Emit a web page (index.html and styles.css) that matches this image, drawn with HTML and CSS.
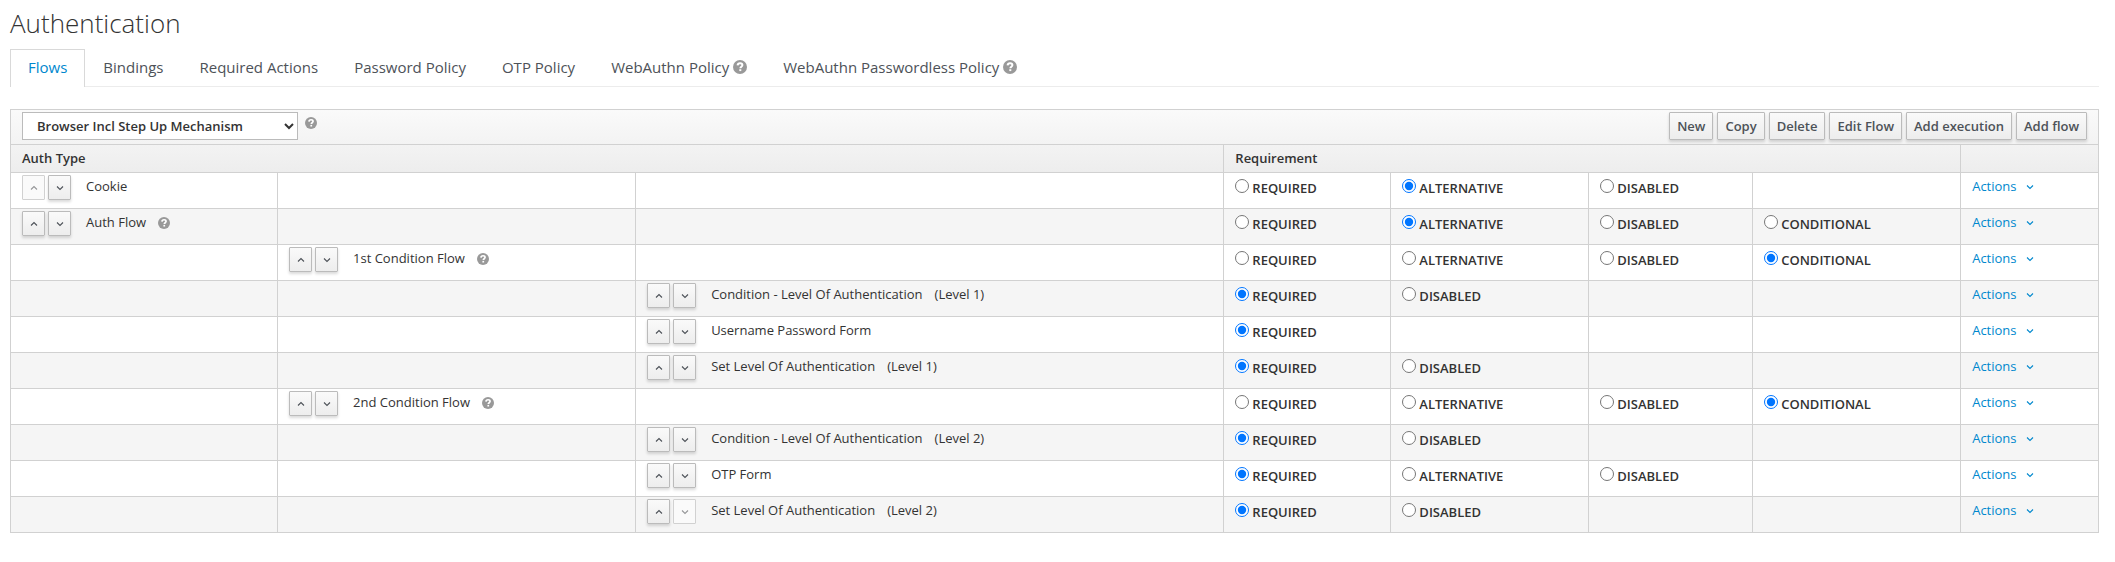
FILE: index.html
```html
<!DOCTYPE html>
<html lang="en">
<head>
<meta charset="utf-8">
<title>Authentication</title>
<link rel="stylesheet" href="styles.css">
</head>
<body>
<svg class="sprite" aria-hidden="true">
  <symbol id="help" viewBox="0 0 14 14"><circle cx="7" cy="7" r="7" fill="#999"/><path d="M4.6 5.4C4.7 4 5.7 3.2 7.1 3.2c1.4 0 2.3.8 2.3 1.9 0 1.7-2 1.6-2 3.2" fill="none" stroke="#fff" stroke-width="2"/><path d="M6.3 9.2h2v1.9h-2z" fill="#fff"/></symbol>
  <symbol id="up" viewBox="0 0 8 8"><path d="M1 5.5 4 2.5l3 3" fill="none" stroke="currentColor" stroke-width="1.1"/></symbol>
  <symbol id="down" viewBox="0 0 8 8"><path d="M1 2.5l3 3 3-3" fill="none" stroke="currentColor" stroke-width="1.1"/></symbol>
</svg>
<main class="page">
  <h1 class="title">Authentication</h1>
  <nav>
    <ul class="tabs">
      <li><a class="tab active" href="#">Flows</a></li>
      <li><a class="tab" href="#">Bindings</a></li>
      <li><a class="tab" href="#">Required Actions</a></li>
      <li><a class="tab" href="#">Password Policy</a></li>
      <li><a class="tab" href="#">OTP Policy</a></li>
      <li><a class="tab" href="#">WebAuthn Policy<svg class="help"><use href="#help"/></svg></a></li>
      <li><a class="tab" href="#">WebAuthn Passwordless Policy<svg class="help"><use href="#help"/></svg></a></li>
    </ul>
  </nav>
  <table class="flows">
    <colgroup><col class="c1"><col class="c2"><col class="c3"><col class="c4"><col class="c5"><col class="c6"><col class="c7"><col class="c8"></colgroup>
    <thead>
      <tr>
        <th colspan="8" class="bar">
          <div class="toolbar">
            <select class="picker" aria-label="Flow"><option>Browser Incl Step Up Mechanism</option></select>
            <svg class="help"><use href="#help"/></svg>
            <div class="buttons">
              <button class="btn">New</button>
              <button class="btn">Copy</button>
              <button class="btn">Delete</button>
              <button class="btn">Edit Flow</button>
              <button class="btn">Add execution</button>
              <button class="btn">Add flow</button>
            </div>
          </div>
        </th>
      </tr>
      <tr class="heads"><th colspan="3">Auth Type</th><th colspan="4">Requirement</th><th></th></tr>
    </thead>
    <tbody>
      <tr>
        <td><div class="step"><button class="move" aria-label="Move up" disabled><svg><use href="#up"/></svg></button><button class="move" aria-label="Move down"><svg><use href="#down"/></svg></button><span class="name">Cookie</span></div></td><td></td><td></td>
        <td><label class="opt"><input type="radio" name="r1">REQUIRED</label></td>
        <td><label class="opt"><input type="radio" name="r1" checked>ALTERNATIVE</label></td>
        <td><label class="opt"><input type="radio" name="r1">DISABLED</label></td>
        <td></td>
        <td><a class="actions" href="#">Actions<svg><use href="#down"/></svg></a></td>
      </tr>
      <tr>
        <td><div class="step"><button class="move" aria-label="Move up"><svg><use href="#up"/></svg></button><button class="move" aria-label="Move down"><svg><use href="#down"/></svg></button><span class="name">Auth Flow</span><svg class="help"><use href="#help"/></svg></div></td><td></td><td></td>
        <td><label class="opt"><input type="radio" name="r2">REQUIRED</label></td>
        <td><label class="opt"><input type="radio" name="r2" checked>ALTERNATIVE</label></td>
        <td><label class="opt"><input type="radio" name="r2">DISABLED</label></td>
        <td><label class="opt"><input type="radio" name="r2">CONDITIONAL</label></td>
        <td><a class="actions" href="#">Actions<svg><use href="#down"/></svg></a></td>
      </tr>
      <tr>
        <td></td><td><div class="step"><button class="move" aria-label="Move up"><svg><use href="#up"/></svg></button><button class="move" aria-label="Move down"><svg><use href="#down"/></svg></button><span class="name">1st Condition Flow</span><svg class="help"><use href="#help"/></svg></div></td><td></td>
        <td><label class="opt"><input type="radio" name="r3">REQUIRED</label></td>
        <td><label class="opt"><input type="radio" name="r3">ALTERNATIVE</label></td>
        <td><label class="opt"><input type="radio" name="r3">DISABLED</label></td>
        <td><label class="opt"><input type="radio" name="r3" checked>CONDITIONAL</label></td>
        <td><a class="actions" href="#">Actions<svg><use href="#down"/></svg></a></td>
      </tr>
      <tr>
        <td></td><td></td><td><div class="step"><button class="move" aria-label="Move up"><svg><use href="#up"/></svg></button><button class="move" aria-label="Move down"><svg><use href="#down"/></svg></button><span class="name">Condition - Level Of Authentication</span><span class="alias">(Level 1)</span></div></td>
        <td><label class="opt"><input type="radio" name="r4" checked>REQUIRED</label></td>
        <td><label class="opt"><input type="radio" name="r4">DISABLED</label></td>
        <td></td><td></td>
        <td><a class="actions" href="#">Actions<svg><use href="#down"/></svg></a></td>
      </tr>
      <tr>
        <td></td><td></td><td><div class="step"><button class="move" aria-label="Move up"><svg><use href="#up"/></svg></button><button class="move" aria-label="Move down"><svg><use href="#down"/></svg></button><span class="name">Username Password Form</span></div></td>
        <td><label class="opt"><input type="radio" name="r5" checked>REQUIRED</label></td>
        <td></td><td></td><td></td>
        <td><a class="actions" href="#">Actions<svg><use href="#down"/></svg></a></td>
      </tr>
      <tr>
        <td></td><td></td><td><div class="step"><button class="move" aria-label="Move up"><svg><use href="#up"/></svg></button><button class="move" aria-label="Move down"><svg><use href="#down"/></svg></button><span class="name">Set Level Of Authentication</span><span class="alias">(Level 1)</span></div></td>
        <td><label class="opt"><input type="radio" name="r6" checked>REQUIRED</label></td>
        <td><label class="opt"><input type="radio" name="r6">DISABLED</label></td>
        <td></td><td></td>
        <td><a class="actions" href="#">Actions<svg><use href="#down"/></svg></a></td>
      </tr>
      <tr>
        <td></td><td><div class="step"><button class="move" aria-label="Move up"><svg><use href="#up"/></svg></button><button class="move" aria-label="Move down"><svg><use href="#down"/></svg></button><span class="name">2nd Condition Flow</span><svg class="help"><use href="#help"/></svg></div></td><td></td>
        <td><label class="opt"><input type="radio" name="r7">REQUIRED</label></td>
        <td><label class="opt"><input type="radio" name="r7">ALTERNATIVE</label></td>
        <td><label class="opt"><input type="radio" name="r7">DISABLED</label></td>
        <td><label class="opt"><input type="radio" name="r7" checked>CONDITIONAL</label></td>
        <td><a class="actions" href="#">Actions<svg><use href="#down"/></svg></a></td>
      </tr>
      <tr>
        <td></td><td></td><td><div class="step"><button class="move" aria-label="Move up"><svg><use href="#up"/></svg></button><button class="move" aria-label="Move down"><svg><use href="#down"/></svg></button><span class="name">Condition - Level Of Authentication</span><span class="alias">(Level 2)</span></div></td>
        <td><label class="opt"><input type="radio" name="r8" checked>REQUIRED</label></td>
        <td><label class="opt"><input type="radio" name="r8">DISABLED</label></td>
        <td></td><td></td>
        <td><a class="actions" href="#">Actions<svg><use href="#down"/></svg></a></td>
      </tr>
      <tr>
        <td></td><td></td><td><div class="step"><button class="move" aria-label="Move up"><svg><use href="#up"/></svg></button><button class="move" aria-label="Move down"><svg><use href="#down"/></svg></button><span class="name">OTP Form</span></div></td>
        <td><label class="opt"><input type="radio" name="r9" checked>REQUIRED</label></td>
        <td><label class="opt"><input type="radio" name="r9">ALTERNATIVE</label></td>
        <td><label class="opt"><input type="radio" name="r9">DISABLED</label></td>
        <td></td>
        <td><a class="actions" href="#">Actions<svg><use href="#down"/></svg></a></td>
      </tr>
      <tr>
        <td></td><td></td><td><div class="step"><button class="move" aria-label="Move up"><svg><use href="#up"/></svg></button><button class="move" aria-label="Move down" disabled><svg><use href="#down"/></svg></button><span class="name">Set Level Of Authentication</span><span class="alias">(Level 2)</span></div></td>
        <td><label class="opt"><input type="radio" name="r10" checked>REQUIRED</label></td>
        <td><label class="opt"><input type="radio" name="r10">DISABLED</label></td>
        <td></td><td></td>
        <td><a class="actions" href="#">Actions<svg><use href="#down"/></svg></a></td>
      </tr>
    </tbody>
  </table>
</main>
</body>
</html>
```
FILE: styles.css
```css
* { box-sizing: border-box; }
body { margin: 0; background: #fff; color: #333; font: 13px/18px "Open Sans", "Liberation Sans", sans-serif; }
button, select { font: inherit; color: inherit; }
a { text-decoration: none; }
.sprite { display: none; }
.page { padding: 7px 16px 0 10px; }
.title { margin: 0; font-size: 26px; line-height: 32px; font-weight: 300; }

.tabs { display: flex; margin: 10px 0 22px; padding: 0; list-style: none; border-bottom: 1px solid #ececec; font-size: 15px; line-height: 20px; }
.tab { display: flex; align-items: center; gap: 4px; padding: 7px 17px 9px; margin-bottom: -1px; border: 1px solid transparent; border-bottom: 0; color: #4d5258; }
.tab.active { color: #0088ce; background: #fff; border-color: #d9d9d9; padding-bottom: 10px; }

.help { width: 12px; height: 12px; flex: none; }
.tab .help { width: 14px; height: 14px; }

.flows { width: 100%; table-layout: fixed; border-collapse: collapse; border: 1px solid #d1d1d1; }
.c1 { width: 12.79%; }
.c2 { width: 17.15%; }
.c3 { width: 28.17%; }
.c4 { width: 8%; }
.c5 { width: 9.48%; }
.c6 { width: 7.85%; }
.c7 { width: 9.96%; }
.c8 { width: 6.6%; }
.flows thead { background: linear-gradient(#fafafa, #ededed); }
.flows th, .flows td { border: 1px solid #d1d1d1; text-align: left; vertical-align: top; padding: 2px 11px; }
.flows th { font-weight: 600; }
.flows .heads th { height: 28px; padding-top: 4px; }
.flows tbody td { height: 36px; }
.flows tbody tr:nth-child(even) { background: #f5f5f5; }

.toolbar { display: flex; align-items: flex-start; height: 30px; }
.toolbar .help { margin: 5px 0 0 7px; }
.picker { width: 276px; height: 28px; padding: 0 3px 0 10px; border: 1px solid #bbb; background: #fff; font-weight: 600; }
.buttons { display: flex; gap: 4px; margin-left: auto; }
.btn { height: 28px; padding: 0 7px; color: #4d5258; font-weight: 600; }
.btn, .move { border: 1px solid #bbb; border-radius: 1px; background: linear-gradient(#fafafa, #ededed); box-shadow: 0 2px 3px rgba(0, 0, 0, 0.15); }

.step { display: flex; align-items: flex-start; gap: 3px; }
.move { display: flex; align-items: center; justify-content: center; width: 23px; height: 25px; padding: 0; color: #4d5258; }
.move svg { width: 8px; height: 8px; }
.move:disabled { background: #fafafa; border-color: #d1d1d1; box-shadow: none; color: #969799; }
.name, .alias { line-height: 23px; }
.name { margin-left: 12px; }
.alias { margin-left: 9px; }
.step .help { margin: 6px 0 0 9px; }

.opt { display: flex; align-items: flex-start; gap: 3px; padding-top: 4px; line-height: 19px; font-weight: 600; }
.opt input { width: 14px; height: 14px; margin: 0; }
.actions { display: inline-flex; align-items: center; gap: 9px; line-height: 23px; color: #0088ce; }
.actions svg { width: 8px; height: 8px; }
```
